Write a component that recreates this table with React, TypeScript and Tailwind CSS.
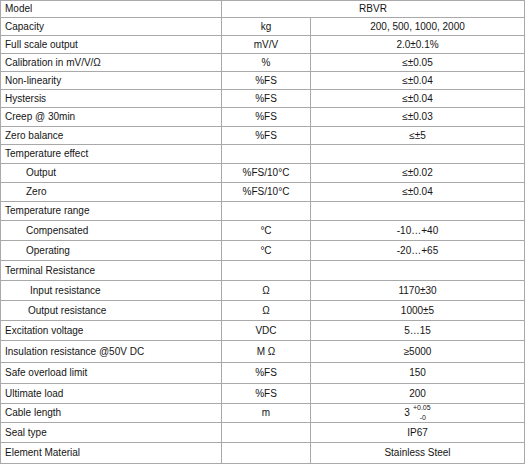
import type { ReactNode } from "react";

type Row = {
  label: string;
  indent?: number;
  unit?: ReactNode;
  value?: ReactNode;
  h: string;
};

const CableValue = () => (
  <span className="inline-flex items-center">
    <span>3</span>
    <span className="ml-[3px] flex flex-col items-center text-[7px] leading-[7px]">
      <span className="-mt-[2px]">+0.05</span>
      <span className="mt-[3px] pl-[2px]">-0</span>
    </span>
  </span>
);

const rows: Row[] = [
  { label: "Capacity", unit: "kg", value: "200, 500, 1000, 2000", h: "h-[18px]" },
  { label: "Full scale output", unit: "mV/V", value: "2.0±0.1%", h: "h-[18px]" },
  { label: "Calibration in mV/V/Ω", unit: "%", value: "≤±0.05", h: "h-[18px]" },
  { label: "Non-linearity", unit: "%FS", value: "≤±0.04", h: "h-[18px]" },
  { label: "Hystersis", unit: "%FS", value: "≤±0.04", h: "h-[18px]" },
  { label: "Creep @ 30min", unit: "%FS", value: "≤±0.03", h: "h-[19px]" },
  { label: "Zero balance", unit: "%FS", value: "≤±5", h: "h-[18px]" },
  { label: "Temperature effect", h: "h-[19px]" },
  { label: "Output", indent: 1, unit: "%FS/10°C", value: "≤±0.02", h: "h-[19px]" },
  { label: "Zero", indent: 1, unit: "%FS/10°C", value: "≤±0.04", h: "h-[19px]" },
  { label: "Temperature range", h: "h-[19px]" },
  { label: "Compensated", indent: 1, unit: "°C", value: "-10…+40", h: "h-[20px]" },
  { label: "Operating", indent: 1, unit: "°C", value: "-20…+65", h: "h-[20px]" },
  { label: "Terminal Resistance", h: "h-[20px]" },
  { label: "Input resistance", indent: 2, unit: "Ω", value: "1170±30", h: "h-[20px]" },
  { label: "Output resistance", indent: 3, unit: "Ω", value: "1000±5", h: "h-[20px]" },
  { label: "Excitation voltage", unit: "VDC", value: "5…15", h: "h-[20px]" },
  { label: "Insulation resistance @50V DC", unit: "M Ω", value: "≥5000", h: "h-[22px]" },
  { label: "Safe overload limit", unit: "%FS", value: "150", h: "h-[21px]" },
  { label: "Ultimate load", unit: "%FS", value: "200", h: "h-[20px]" },
  { label: "Cable length", unit: "m", value: <CableValue />, h: "h-[19px]" },
  { label: "Seal type", value: "IP67", h: "h-[20px]" },
  { label: "Element Material", value: "Stainless Steel", h: "h-[21px]" },
];

const indentClass = ["pl-[4px]", "pl-[25px]", "pl-[29px]", "pl-[27px]"];

export default function App() {
  return (
    <main
      className="w-[525px] h-[465px] bg-white text-[10px] text-[#141414] leading-none"
      style={{ fontFamily: '"Liberation Sans", Arial, sans-serif' }}
    >
      <div className="w-[525px] border-l border-t border-r border-[#a9a9a9]">
        {/* Model row spans both value columns */}
        <div className="flex h-[17px] border-b border-[#a9a9a9]">
          <div className="w-[221px] shrink-0 border-r border-[#a9a9a9] flex items-center pl-[4px]">Model</div>
          <div className="flex-1 flex items-center justify-center">RBVR</div>
        </div>

        {rows.map((r) => (
          <div key={r.label} className={`flex ${r.h} border-b border-[#a9a9a9]`}>
            <div
              className={`w-[221px] shrink-0 border-r border-[#a9a9a9] flex items-center ${indentClass[r.indent ?? 0]}`}
            >
              {r.label}
            </div>
            <div className="w-[89px] shrink-0 border-r border-[#a9a9a9] flex items-center justify-center">
              {r.unit}
            </div>
            <div className="flex-1 flex items-center justify-center">{r.value}</div>
          </div>
        ))}
      </div>
    </main>
  );
}
